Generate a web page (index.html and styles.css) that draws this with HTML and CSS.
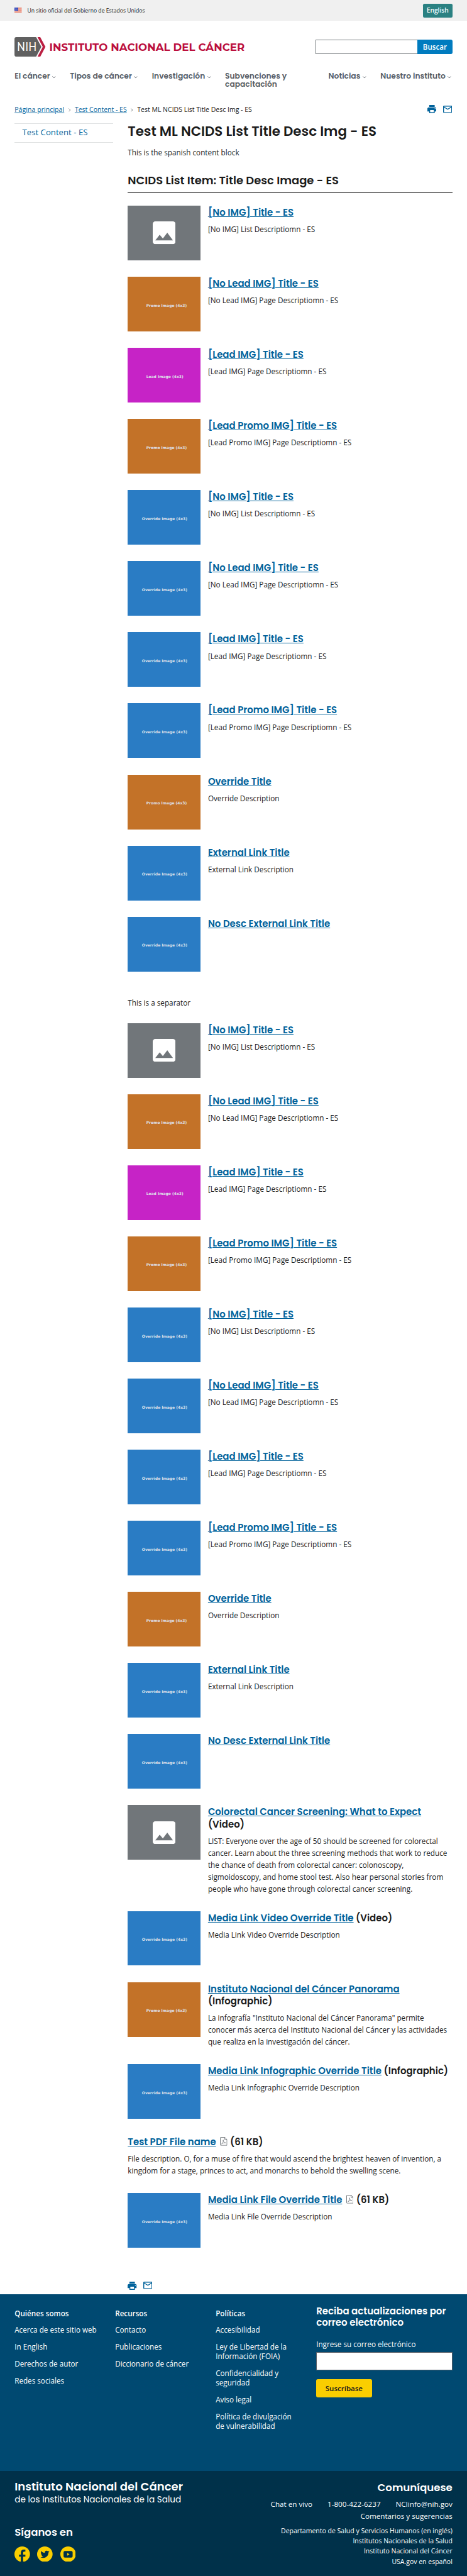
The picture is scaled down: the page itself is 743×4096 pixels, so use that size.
FILE: index.html
```html
<!DOCTYPE html>
<html lang="es">
<head>
<meta charset="utf-8">
<title>Test ML NCIDS List Title Desc Img - ES</title>
<link rel="stylesheet" href="styles.css">
</head>
<body>
<svg class="sprite" aria-hidden="true">
  <symbol id="i-image" viewBox="3 3 18 18"><path fill="#fff" d="M21 19V5c0-1.1-.9-2-2-2H5c-1.1 0-2 .9-2 2v14c0 1.1.9 2 2 2h14c1.1 0 2-.9 2-2zM8.5 13.5l2.500 3.010L14.500 12l4.500 6H5l3.500-4.500z"/></symbol>
  <symbol id="i-chev" viewBox="0 0 8 5"><path d="M.5 .6 4 4 7.500 .6" fill="none" stroke="#565c65" stroke-width="1.200"/></symbol>
  <symbol id="i-sep" viewBox="0 0 5 8"><path d="M.7 .7 4 4 .7 7.300" fill="none" stroke="#71767a" stroke-width="1.300"/></symbol>
  <symbol id="i-print" viewBox="2 3 20 18"><path fill="#00629b" d="M19 8H5c-1.660 0-3 1.340-3 3v6h4v4h12v-4h4v-6c0-1.660-1.340-3-3-3zm-3 11H8v-5h8v5zm3-7c-.550 0-1-.450-1-1s.450-1 1-1 1 .450 1 1-.450 1-1 1zm-1-9H6v4h12V3z"/></symbol>
  <symbol id="i-mail" viewBox="2 4 20 16"><path fill="#00629b" d="M20 4H4c-1.100 0-1.990.900-1.990 2L2 18c0 1.100.900 2 2 2h16c1.100 0 2-.900 2-2V6c0-1.100-.900-2-2-2zm0 14H4V8l8 5 8-5v10zm-8-7L4 6h16l-8 5z"/></symbol>
  <symbol id="i-pdf" viewBox="0 0 16 19">
    <path d="M1.700.7h8.800l4.800 4.800v12.800H1.700a1 1 0 0 1-1-1V1.700a1 1 0 0 1 1-1zM10.500.7v4.800h4.800" fill="none" stroke="#71767a" stroke-width="1.300"/>
    <path d="M3.300 15.500c2-1 4.500-5.500 4.200-8.500-.2-1-1-.6-.8.300.4 2.700 2.800 5.200 5.600 5.300M3.300 15.500c1-2 5-3 9-2.900" fill="none" stroke="#71767a" stroke-width="1"/>
  </symbol>
</svg>

<header>
  <div class="banner">
    <div class="banner-text">
      <svg class="flag" viewBox="0 0 16 11"><rect width="16" height="11" fill="#fff"/><path d="M0 .5h16M0 2.500h16M0 4.500h16M0 6.500h16M0 8.500h16M0 10.500h16" stroke="#db3e1f"/><rect width="8" height="7" fill="#1e33b1"/><path d="M1 1.500h6M2 3.500h6M1 5.500h6" stroke="#fff" stroke-dasharray="1 1"/></svg>
      <span>Un sitio oficial del Gobierno de Estados Unidos</span>
    </div>
    <a class="lang">English</a>
  </div>
  <div class="masthead">
    <svg class="logo" viewBox="0 0 508 43">
      <path d="M4 0h43.500L59 21.500 47.500 43H4a4 4 0 0 1-4-4V4a4 4 0 0 1 4-4z" fill="#606060"/>
      <path d="M50.500 0h6L68 21.500 56.500 43h-6L62 21.500z" fill="#bb2042"/>
      <text class="logo-nih" x="5.500" y="31" textLength="43" lengthAdjust="spacingAndGlyphs">NIH</text>
      <text class="logo-name" x="76.500" y="30" textLength="429" lengthAdjust="spacing">INSTITUTO NACIONAL DEL CÁNCER</text>
    </svg>
    <div class="search"><span class="search-field"></span><span class="search-btn">Buscar</span></div>
  </div>
  <nav class="mainnav">
    <a>El cáncer<svg class="chev"><use href="#i-chev"/></svg></a>
    <a>Tipos de cáncer<svg class="chev"><use href="#i-chev"/></svg></a>
    <a>Investigación<svg class="chev"><use href="#i-chev"/></svg></a>
    <a>Subvenciones y<br>capacitación</a>
    <a>Noticias<svg class="chev"><use href="#i-chev"/></svg></a>
    <a>Nuestro instituto<svg class="chev"><use href="#i-chev"/></svg></a>
  </nav>
</header>

<div class="crumbbar">
  <div class="crumbs">
    <a class="link link-home">Página principal</a><svg class="sep"><use href="#i-sep"/></svg><a class="link">Test Content - ES</a><svg class="sep"><use href="#i-sep"/></svg><span>Test ML NCIDS List Title Desc Img - ES</span>
  </div>
  <div class="tools"><svg class="print"><use href="#i-print"/></svg><svg class="mail"><use href="#i-mail"/></svg></div>
</div>

<div class="page">
  <aside class="sidenav"><a>Test Content - ES</a></aside>
  <main>
    <h1>Test ML NCIDS List Title Desc Img - ES</h1>
    <p class="intro">This is the spanish content block</p>
    <h2>NCIDS List Item: Title Desc Image - ES</h2>

    <ul class="list">
      <li><div class="tile none"><svg class="photo"><use href="#i-image"/></svg></div><div><h3><a>[No IMG] Title - ES</a></h3><p>[No IMG] List Descriptiomn - ES</p></div></li>
      <li><div class="tile promo">Promo Image (4x3)</div><div><h3><a>[No Lead IMG] Title - ES</a></h3><p>[No Lead IMG] Page Descriptiomn - ES</p></div></li>
      <li><div class="tile lead">Lead Image (4x3)</div><div><h3><a>[Lead IMG] Title - ES</a></h3><p>[Lead IMG] Page Descriptiomn - ES</p></div></li>
      <li><div class="tile promo">Promo Image (4x3)</div><div><h3><a>[Lead Promo IMG] Title - ES</a></h3><p>[Lead Promo IMG] Page Descriptiomn - ES</p></div></li>
      <li><div class="tile">Override Image (4x3)</div><div><h3><a>[No IMG] Title - ES</a></h3><p>[No IMG] List Descriptiomn - ES</p></div></li>
      <li><div class="tile">Override Image (4x3)</div><div><h3><a>[No Lead IMG] Title - ES</a></h3><p>[No Lead IMG] Page Descriptiomn - ES</p></div></li>
      <li><div class="tile">Override Image (4x3)</div><div><h3><a>[Lead IMG] Title - ES</a></h3><p>[Lead IMG] Page Descriptiomn - ES</p></div></li>
      <li><div class="tile">Override Image (4x3)</div><div><h3><a>[Lead Promo IMG] Title - ES</a></h3><p>[Lead Promo IMG] Page Descriptiomn - ES</p></div></li>
      <li><div class="tile promo">Promo Image (4x3)</div><div><h3><a>Override Title</a></h3><p>Override Description</p></div></li>
      <li><div class="tile">Override Image (4x3)</div><div><h3><a>External Link Title</a></h3><p>External Link Description</p></div></li>
      <li><div class="tile">Override Image (4x3)</div><div><h3><a>No Desc External Link Title</a></h3></div></li>
    </ul>

    <p class="separator">This is a separator</p>

    <ul class="list">
      <li><div class="tile none"><svg class="photo"><use href="#i-image"/></svg></div><div><h3><a>[No IMG] Title - ES</a></h3><p>[No IMG] List Descriptiomn - ES</p></div></li>
      <li><div class="tile promo">Promo Image (4x3)</div><div><h3><a>[No Lead IMG] Title - ES</a></h3><p>[No Lead IMG] Page Descriptiomn - ES</p></div></li>
      <li><div class="tile lead">Lead Image (4x3)</div><div><h3><a>[Lead IMG] Title - ES</a></h3><p>[Lead IMG] Page Descriptiomn - ES</p></div></li>
      <li><div class="tile promo">Promo Image (4x3)</div><div><h3><a>[Lead Promo IMG] Title - ES</a></h3><p>[Lead Promo IMG] Page Descriptiomn - ES</p></div></li>
      <li><div class="tile">Override Image (4x3)</div><div><h3><a>[No IMG] Title - ES</a></h3><p>[No IMG] List Descriptiomn - ES</p></div></li>
      <li><div class="tile">Override Image (4x3)</div><div><h3><a>[No Lead IMG] Title - ES</a></h3><p>[No Lead IMG] Page Descriptiomn - ES</p></div></li>
      <li><div class="tile">Override Image (4x3)</div><div><h3><a>[Lead IMG] Title - ES</a></h3><p>[Lead IMG] Page Descriptiomn - ES</p></div></li>
      <li><div class="tile">Override Image (4x3)</div><div><h3><a>[Lead Promo IMG] Title - ES</a></h3><p>[Lead Promo IMG] Page Descriptiomn - ES</p></div></li>
      <li><div class="tile promo">Promo Image (4x3)</div><div><h3><a>Override Title</a></h3><p>Override Description</p></div></li>
      <li><div class="tile">Override Image (4x3)</div><div><h3><a>External Link Title</a></h3><p>External Link Description</p></div></li>
      <li><div class="tile">Override Image (4x3)</div><div><h3><a>No Desc External Link Title</a></h3></div></li>
      <li><div class="tile none"><svg class="photo"><use href="#i-image"/></svg></div><div><h3><a>Colorectal Cancer Screening: What to Expect</a><br>(Video)</h3><p>LIST: Everyone over the age of 50 should be screened for colorectal<br>cancer. Learn about the three screening methods that work to reduce<br>the chance of death from colorectal cancer: colonoscopy,<br>sigmoidoscopy, and home stool test. Also hear personal stories from<br>people who have gone through colorectal cancer screening.</p></div></li>
      <li><div class="tile">Override Image (4x3)</div><div><h3><a>Media Link Video Override Title</a> (Video)</h3><p>Media Link Video Override Description</p></div></li>
      <li><div class="tile promo">Promo Image (4x3)</div><div><h3><a>Instituto Nacional del Cáncer Panorama</a><br>(Infographic)</h3><p>La infografía "Instituto Nacional del Cáncer Panorama" permite<br>conocer más acerca del Instituto Nacional del Cáncer y las actividades<br>que realiza en la investigación del cáncer.</p></div></li>
      <li><div class="tile">Override Image (4x3)</div><div><h3><a>Media Link Infographic Override Title</a> (Infographic)</h3><p>Media Link Infographic Override Description</p></div></li>
      <li><div><h3><a>Test PDF File name</a><svg class="pdf"><use href="#i-pdf"/></svg>(61 KB)</h3><p>File description. O, for a muse of fire that would ascend the brightest heaven of invention, a<br>kingdom for a stage, princes to act, and monarchs to behold the swelling scene.</p></div></li>
      <li><div class="tile">Override Image (4x3)</div><div><h3><a>Media Link File Override Title</a><svg class="pdf"><use href="#i-pdf"/></svg>(61 KB)</h3><p>Media Link File Override Description</p></div></li>
    </ul>
    <div class="tools tools-end"><svg class="print"><use href="#i-print"/></svg><svg class="mail"><use href="#i-mail"/></svg></div>
  </main>
</div>

<footer>
  <div class="foot-top">
    <ul class="foot-col"><li class="foot-head">Quiénes somos</li><li>Acerca de este sitio web</li><li>In English</li><li>Derechos de autor</li><li>Redes sociales</li></ul>
    <ul class="foot-col"><li class="foot-head">Recursos</li><li>Contacto</li><li>Publicaciones</li><li>Diccionario de cáncer</li></ul>
    <ul class="foot-col"><li class="foot-head">Políticas</li><li>Accesibilidad</li><li>Ley de Libertad de la<br>Información (FOIA)</li><li>Confidencialidad y<br>seguridad</li><li>Aviso legal</li><li>Política de divulgación<br>de vulnerabilidad</li></ul>
    <div class="signup">
      <h4>Reciba actualizaciones por<br>correo electrónico</h4>
      <label>Ingrese su correo electrónico</label>
      <span class="email"></span>
      <span class="subscribe">Suscríbase</span>
    </div>
  </div>
  <div class="foot-bottom">
    <div>
      <div class="org">Instituto Nacional del Cáncer</div>
      <div class="org-sub">de los Institutos Nacionales de la Salud</div>
      <div class="follow">Síganos en</div>
      <div class="social">
        <svg viewBox="0 0 34 34"><circle cx="17" cy="17" r="17" fill="#face00"/><path d="M14 34V22.500h-4V18h4v-4.500C14 9.400 16.400 7 20.200 7H24v4.500h-2.300c-2.100 0-2.700 1-2.700 2.700V18h5v4.500h-5V34z" fill="#00314a"/></svg>
        <svg viewBox="0 0 34 34"><circle cx="17" cy="17" r="17" fill="#face00"/><path transform="translate(7.500 7.500) scale(.81)" d="M23.950 4.570a10 10 0 0 1-2.820.780 4.960 4.960 0 0 0 2.160-2.730c-.950.560-2 .960-3.120 1.190a4.920 4.920 0 0 0-8.380 4.480C7.690 8.090 4.070 6.130 1.640 3.160a4.820 4.820 0 0 0-.660 2.470c0 1.710.870 3.210 2.190 4.100a4.900 4.900 0 0 1-2.230-.620v.060a4.920 4.920 0 0 0 3.950 4.830 5 5 0 0 1-2.210.080 4.940 4.940 0 0 0 4.600 3.420A9.870 9.870 0 0 1 0 19.540a13.990 13.990 0 0 0 7.550 2.210c9.050 0 14-7.500 14-13.980 0-.210 0-.420-.020-.630a9.940 9.940 0 0 0 2.460-2.550z" fill="#00314a"/></svg>
        <svg viewBox="0 0 34 34"><circle cx="17" cy="17" r="17" fill="#face00"/><rect x="7" y="10" width="20" height="14.500" rx="3" fill="#00314a"/><path d="M15 14v6.200l5.200-3.100z" fill="#face00"/></svg>
      </div>
    </div>
    <div class="contact">
      <div class="contact-head">Comuníquese</div>
      <div class="contact-row"><span>Chat en vivo</span><span>1-800-422-6237</span><span>NCIinfo@nih.gov</span></div>
      <div class="contact-row">Comentarios y sugerencias</div>
      <div class="agencies">Departamento de Salud y Servicios Humanos (en inglés)<br>Institutos Nacionales de la Salud<br>Instituto Nacional del Cáncer<br>USA.gov en español</div>
    </div>
  </div>
</footer>
</body>
</html>
```
FILE: styles.css
```css
/* 1rem = 10 design pixels */
html { font-size: 7.249px; }
* { box-sizing: border-box; }
body { margin: 0; background: #fff; color: #1b1b1b; font-family: "Open Sans", sans-serif; font-size: 1.62rem; line-height: 2.6rem; }
h1, h2, h3, h4, p, ul { margin: 0; padding: 0; }
ul { list-style: none; }
svg { display: block; flex: none; }
.sprite { position: absolute; width: 0; height: 0; }

h1, h2, h3, h4, .mainnav, .org, .org-sub, .follow, .contact-head {
  font-family: Poppins, Inter, sans-serif;
  font-weight: 600;
}

.banner { display: flex; justify-content: space-between; align-items: center; height: 4.6rem; padding: 0 3.2rem; background: #f0f0f0; }
.banner-text { display: flex; align-items: center; gap: 1.2rem; font-size: 1.19rem; line-height: 1.6rem; }
.banner-text span { margin-top: .2rem; }
.flag { width: 1.6rem; height: 1.1rem; margin-bottom: .3rem; }
.lang { width: 6.5rem; height: 3rem; border-radius: .3rem; background: #2a8182; color: #fff; font-size: 1.41rem; font-weight: 600; line-height: 3rem; text-align: center; }

.masthead { display: flex; justify-content: space-between; align-items: flex-start; height: 11.3rem; padding: 3.5rem 3.2rem 0; }
.logo { width: 50.8rem; height: 4.3rem; }
.logo-nih { font: 500 27px Montserrat, sans-serif; fill: #fff; }
.logo-name { font: 700 23px Montserrat, sans-serif; fill: #bb0e3d; }
.search { display: flex; width: 30rem; height: 3.2rem; margin-top: .6rem; }
.search-field { flex: 1; border: 1px solid #71767a; border-right: 0; }
.search-btn { width: 7.7rem; border-radius: 0 .4rem .4rem 0; background: #007bbf; color: #fff; font-size: 1.6rem; font-weight: 600; line-height: 3.2rem; text-align: center; }

.mainnav { display: flex; height: 6.2rem; padding-left: 3.2rem; color: #565c65; font-size: 1.69rem; line-height: 1.7rem; }
.mainnav a { display: flex; align-items: flex-start; flex: none; gap: .5rem; width: 12.15rem; white-space: nowrap; }
.mainnav a:nth-child(2) { width: 18rem; }
.mainnav a:nth-child(3) { width: 16.05rem; }
.mainnav a:nth-child(4) { display: block; width: 22.7rem; }
.mainnav a:nth-child(5) { width: 11.4rem; }
.chev { width: .8rem; height: .5rem; margin-top: .8rem; }

.crumbbar { display: flex; justify-content: space-between; padding: 0 3.3rem 0 3.2rem; height: 4.9rem; }
.crumbs { display: flex; align-items: center; height: 4rem; font-size: 1.45rem; white-space: nowrap; }
.link { color: #00629b; text-decoration: underline; }
.link-home { letter-spacing: .01rem; }
.sep { width: .5rem; height: .8rem; margin: 0 .9rem; }
.tools { display: flex; align-items: center; gap: 1.4rem; height: 3.8rem; }
.print { width: 2rem; height: 1.8rem; }
.mail { width: 2rem; height: 1.6rem; }

.page { display: flex; gap: 3.25rem; padding: 0 3.2rem; }
.sidenav { flex: none; width: 21.6rem; height: 4.2rem; margin-top: .1rem; padding-left: 1.7rem; border: solid #dfe1e2; border-width: 1px 0; color: #00629b; font-size: 1.82rem; font-weight: 500; line-height: 3.8rem; }
main { flex: 1; height: 476.2rem; white-space: nowrap; }
h1 { font-size: 2.95rem; line-height: 3.6rem; }
.intro { margin-top: 1.6rem; }
h2 { height: 7.5rem; padding-top: 3.25rem; border-bottom: 1px solid #1b1b1b; font-size: 2.48rem; line-height: 3rem; margin-bottom: 2.8rem; }
.list { display: flex; flex-direction: column; gap: 3.6rem; }
.list li { display: flex; gap: 1.6rem; }
.tile { flex: none; width: 16rem; height: 12rem; padding: 5.75rem 0 0 3.1rem; background: #2a7cc4; color: #dfe0ea; font: 700 .83rem/1rem "DejaVu Sans", sans-serif; }
.promo, .lead { padding-left: 4.05rem; }
.promo { background: #c37228; }
.lead { background: #c623c6; }
.none { display: flex; align-items: center; justify-content: center; padding: 0; background: #71767a; }
.photo { width: 5rem; height: 5rem; }
h3 { padding-top: .14rem; font-size: 2.06rem; line-height: 2.7rem; }
h3 a { color: #00629b; text-decoration: underline; text-decoration-thickness: .15rem; }
h3 + p { margin-top: 1.05rem; }
.pdf { display: inline-block; width: 1.6rem; height: 1.9rem; margin: 0 .6rem 0 .9rem; vertical-align: -.1rem; }
.separator { margin: 5.6rem 0 3.1rem; }
.tools-end { margin-top: 6.4rem; }

footer { color: #fff; font-size: 1.615rem; line-height: 2.1rem; white-space: nowrap; }
.foot-top { display: flex; height: 38.8rem; padding: 3.15rem 3.2rem 0; background: #004971; }
.foot-col { flex: none; width: 22.07rem; }
.foot-col li { margin-bottom: 1.6rem; }
.foot-head { font-weight: 600; }
.signup { flex: 1; display: flex; flex-direction: column; }
h4 { margin-top: -.6rem; font-size: 2.07rem; line-height: 2.5rem; }
label { margin-top: 2.36rem; }
.email { height: 4rem; margin-top: .7rem; border: 1px solid #565c65; background: #fff; }
.subscribe { width: 12.2rem; height: 4rem; margin-top: 2rem; border-radius: .4rem; background: #face00; color: #1b1b1b; font-size: 1.59rem; font-weight: 600; line-height: 4rem; text-align: center; }
.foot-bottom { display: flex; justify-content: space-between; height: 23rem; padding: 2.1rem 3.2rem 0; background: #00314a; }
.org { font-size: 2.5rem; line-height: 2.8rem; }
.org-sub { margin-top: .15rem; font-size: 1.88rem; font-weight: 400; line-height: 2.4rem; }
.follow { margin-top: 4.65rem; font-size: 2.28rem; line-height: 2.8rem; }
.social { display: flex; gap: 1.6rem; margin-top: 1.6rem; }
.social svg { width: 3.4rem; height: 3.4rem; }
.contact { text-align: right; }
.contact-head { font-size: 2.29rem; line-height: 2.8rem; margin-top: .3rem; }
.contact-row { display: flex; justify-content: flex-end; gap: 3.3rem; font-size: 1.61rem; line-height: 2.65rem; margin-top: .7rem; }
.contact-row + .contact-row { margin-top: 0; }
.agencies { margin-top: .75rem; font-size: 1.45rem; line-height: 2.265rem; }
```
